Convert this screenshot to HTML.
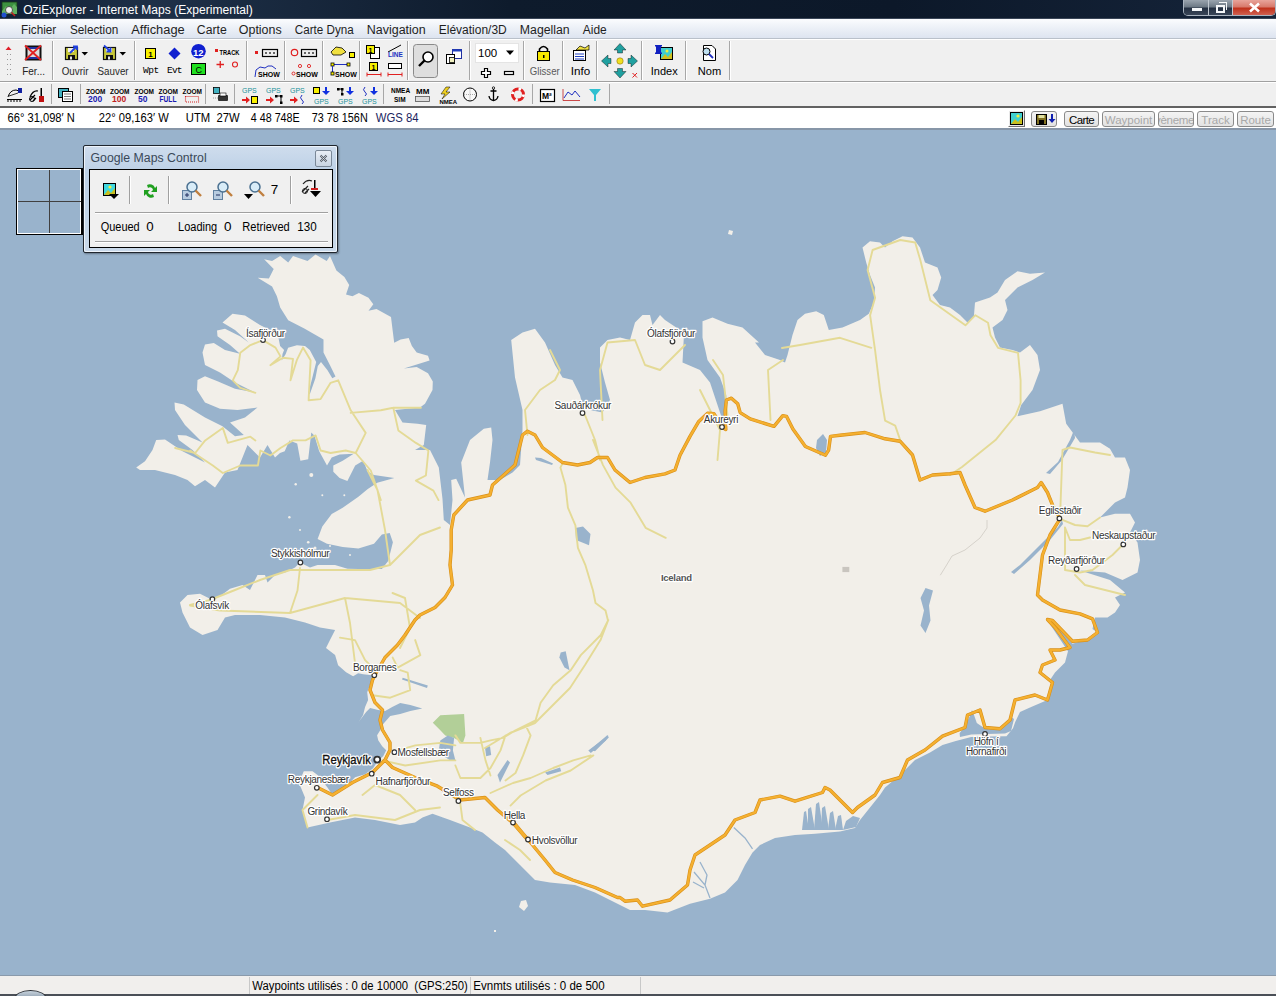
<!DOCTYPE html>
<html><head><meta charset="utf-8">
<style>
*{margin:0;padding:0;box-sizing:border-box}
html,body{width:1276px;height:996px;overflow:hidden;background:#f0f0f0;font-family:"Liberation Sans",sans-serif;font-size:12px;color:#000}
.abs{position:absolute}
#title{left:0;top:0;width:1276px;height:19px;background:linear-gradient(90deg,#102035 0%,#1e3048 12%,#0e1b2c 40%,#0c1829 70%,#15243a 100%);color:#fff;font-size:13px;border-bottom:1px solid #3a4658}
#menu{left:0;top:19px;width:1276px;height:20px;background:linear-gradient(#fbfcfe 0%,#eef2f8 40%,#dde4f0 100%);border-bottom:1px solid #b9c0ca}
#menu span{position:absolute;top:3px;font-size:12.5px;color:#1e1e1e}
#tb1{left:0;top:39px;width:1276px;height:43px;background:#f0f0f0;border-top:1px solid #fff;border-bottom:1px solid #a0a0a0}
#tb2{left:0;top:82px;width:1276px;height:26px;background:#f0f0f0;border-top:1px solid #fff;border-bottom:2px solid #626262}
#coord{left:0;top:108px;width:1276px;height:22px;background:#fff;border-bottom:2px solid #8796a8}
#coord span{position:absolute;top:5px;font-size:12px}
#map{left:0;top:130px;width:1276px;height:845px;background:#99b3cc;overflow:hidden}
#status{left:0;top:975px;width:1276px;height:21px;background:#f1efed;border-top:1px solid #8a9aab;overflow:hidden}
.btn{position:absolute;top:111px;height:16px;border:1px solid #8a8a8a;border-radius:3px;background:linear-gradient(#f4f4f4,#e2e2e2);font-size:11.5px;text-align:center;line-height:17px;overflow:hidden;white-space:nowrap}
.dis{color:#a8a8a8}
</style></head><body>
<div id="title" class="abs">
  <svg class="abs" style="left:1px;top:1px" width="18" height="17" viewBox="0 0 18 17">
    <rect x="1" y="1" width="15" height="12" fill="#3c9040" stroke="#1a3a1a" stroke-width="0.8"/>
    <path d="M1,10 L5,5 L9,8 L13,3 L16,6 L16,13 L1,13 Z" fill="#60b060"/>
    <circle cx="8" cy="9" r="3.5" fill="#f0f0f0" stroke="#333" stroke-width="0.8"/>
    <path d="M10.5,11.5 L14,15" stroke="#c02020" stroke-width="1.6"/>
    <circle cx="3" cy="14" r="2.5" fill="#2050d0"/>
  </svg>
    <div class="abs" style="left:1183px;top:0;width:93px;height:16px;border:1px solid #aab4c0;border-top:none;border-radius:0 0 5px 5px;overflow:hidden;background:#1a2536">
    <div class="abs" style="left:0;top:0;width:25px;height:15px;background:linear-gradient(#9aa4ae 0%,#6e7a86 45%,#243042 55%,#3a4658 100%);border-right:1px solid #c0c8d0"></div>
    <div class="abs" style="left:8px;top:8px;width:10px;height:3px;background:#f4f6f8"></div>
    <div class="abs" style="left:25px;top:0;width:24px;height:15px;background:linear-gradient(#9aa4ae 0%,#6e7a86 45%,#243042 55%,#3a4658 100%);border-right:1px solid #c0c8d0"></div>
    <div class="abs" style="left:35px;top:2px;width:8px;height:8px;border:1px solid #f4f6f8;border-left:none;border-bottom:none"></div>
    <div class="abs" style="left:32px;top:5px;width:9px;height:8px;border:2px solid #f4f6f8"></div>
    <div class="abs" style="left:49px;top:0;width:44px;height:15px;background:linear-gradient(#e8a49a 0%,#d87a6c 45%,#c0321c 55%,#d06050 100%)"></div>
    <svg class="abs" style="left:64px;top:2px" width="14" height="11"><path d="M2,1.5 L11,9.5 M11,1.5 L2,9.5" stroke="#fff" stroke-width="2.6"/></svg>
  </div>
</div>
<div id="menu" class="abs"></div>
<div id="tb1" class="abs"></div>
<div id="tb2" class="abs"></div>
<svg width="1276" height="67" viewBox="0 39 1276 67" style="position:absolute;left:0;top:39px" font-family="Liberation Sans, sans-serif">
<!-- separators tb1 -->
<g stroke="#a7a7a7" stroke-width="1">
<line x1="52.5" y1="41" x2="52.5" y2="80"/><line x1="134.5" y1="41" x2="134.5" y2="80"/><line x1="246.5" y1="41" x2="246.5" y2="80"/>
<line x1="284.5" y1="41" x2="284.5" y2="80"/><line x1="322.5" y1="41" x2="322.5" y2="80"/><line x1="359.5" y1="41" x2="359.5" y2="80"/>
<line x1="407.5" y1="41" x2="407.5" y2="80"/><line x1="469.5" y1="41" x2="469.5" y2="80"/><line x1="523.5" y1="41" x2="523.5" y2="80"/>
<line x1="562.5" y1="41" x2="562.5" y2="80"/><line x1="596.5" y1="41" x2="596.5" y2="80"/><line x1="641.5" y1="41" x2="641.5" y2="80"/>
<line x1="685.5" y1="41" x2="685.5" y2="80"/><line x1="729.5" y1="41" x2="729.5" y2="80"/>
<!-- tb2 -->
<line x1="51.5" y1="84" x2="51.5" y2="104"/><line x1="80.5" y1="84" x2="80.5" y2="104"/><line x1="205.5" y1="84" x2="205.5" y2="104"/>
<line x1="234.5" y1="84" x2="234.5" y2="104"/><line x1="383.5" y1="84" x2="383.5" y2="104"/><line x1="532.5" y1="84" x2="532.5" y2="104"/>
<line x1="609.5" y1="84" x2="609.5" y2="104"/>
</g>
<g stroke="#ffffff" stroke-width="1">
<line x1="53.5" y1="41" x2="53.5" y2="80"/><line x1="135.5" y1="41" x2="135.5" y2="80"/><line x1="247.5" y1="41" x2="247.5" y2="80"/>
<line x1="285.5" y1="41" x2="285.5" y2="80"/><line x1="323.5" y1="41" x2="323.5" y2="80"/><line x1="360.5" y1="41" x2="360.5" y2="80"/>
<line x1="408.5" y1="41" x2="408.5" y2="80"/><line x1="470.5" y1="41" x2="470.5" y2="80"/><line x1="524.5" y1="41" x2="524.5" y2="80"/>
<line x1="563.5" y1="41" x2="563.5" y2="80"/><line x1="597.5" y1="41" x2="597.5" y2="80"/><line x1="642.5" y1="41" x2="642.5" y2="80"/>
<line x1="686.5" y1="41" x2="686.5" y2="80"/><line x1="730.5" y1="41" x2="730.5" y2="80"/>
</g>
<!-- grip -->
<path d="M5.5,50 L8.5,46.5 L11.5,50 Z" fill="#e0202a"/>
<g fill="#9a9a9a"><rect x="7" y="54" width="1" height="1"/><rect x="10" y="54" width="1" height="1"/><rect x="7" y="59" width="1" height="1"/><rect x="10" y="59" width="1" height="1"/><rect x="7" y="64" width="1" height="1"/><rect x="10" y="64" width="1" height="1"/><rect x="7" y="69" width="1" height="1"/><rect x="10" y="69" width="1" height="1"/><rect x="7" y="74" width="1" height="1"/><rect x="10" y="74" width="1" height="1"/></g>
<!-- Fer icon -->
<rect x="26.5" y="46.5" width="14" height="13" fill="#dcdcdc" stroke="#101010" stroke-width="2"/>
<rect x="27" y="47" width="13" height="2" fill="#2030a0"/><rect x="27" y="57" width="13" height="2" fill="#2030a0"/>
<path d="M25,45.5 L41,60 M41,45.5 L25,60" stroke="#e02020" stroke-width="1.8"/>
<!-- Ouvrir -->
<rect x="65.5" y="47.5" width="12" height="12" fill="#c8c83a" stroke="#101010" stroke-width="1.2"/>
<rect x="68" y="48" width="6" height="4" fill="#f0f0f0"/><rect x="68" y="55" width="7" height="5" fill="#101010"/><rect x="70" y="56.5" width="2" height="3" fill="#e8e8e8"/>
<path d="M70,53 L76,47 M73,46.5 L77,46.5 L77,50" stroke="#2040e0" stroke-width="1.8" fill="none"/>
<path d="M81.5,52 L88,52 L84.75,55.5 Z" fill="#000"/>
<!-- Sauver -->
<rect x="103.5" y="47.5" width="12" height="12" fill="#c8c83a" stroke="#101010" stroke-width="1.2"/>
<rect x="106" y="48" width="6" height="4" fill="#f0f0f0"/><rect x="106" y="55" width="7" height="5" fill="#101010"/><rect x="108" y="56.5" width="2" height="3" fill="#e8e8e8"/>
<path d="M104,45.5 L110,51 M106.5,51.5 L110.5,51.5 L110.5,47.5" stroke="#2040e0" stroke-width="1.8" fill="none"/>
<path d="M119.5,52 L126,52 L122.75,55.5 Z" fill="#000"/>
<!-- Wpt Evt -->
<rect x="145.5" y="48.5" width="10" height="10" fill="#f8f000" stroke="#000" stroke-width="1"/>
<text x="148.3" y="57" font-size="8" font-weight="bold" fill="#000">1</text>
<text x="143" y="73" font-size="9.5" font-family="Liberation Mono, monospace" fill="#000" letter-spacing="-0.5">Wpt</text>
<path d="M174.5,47.5 L180.5,53.5 L174.5,59.5 L168.5,53.5 Z" fill="#1020d0"/>
<text x="167" y="73" font-size="9.5" font-family="Liberation Mono, monospace" fill="#000" letter-spacing="-0.8">Evt</text>
<circle cx="198.5" cy="51.2" r="7.3" fill="#1020d0"/>
<text x="193" y="55.5" font-size="9.5" font-weight="bold" fill="#fff">12</text>
<rect x="191.5" y="63.5" width="14" height="11" fill="#20e020" stroke="#000" stroke-width="1"/>
<text x="195.5" y="72.5" font-size="9" fill="#000">C</text>
<rect x="215" y="49" width="3" height="3" fill="#e02020"/>
<text x="219.5" y="54.5" font-size="7.5" font-weight="bold" fill="#000" textLength="20" lengthAdjust="spacingAndGlyphs">TRACK</text>
<path d="M216.5,64.5 L224,64.5 M220.25,61 L220.25,68" stroke="#e02020" stroke-width="1.3"/>
<circle cx="235" cy="64.5" r="2.5" fill="none" stroke="#e02020" stroke-width="1.1"/>
<!-- show group 1 -->
<rect x="255" y="51" width="3" height="3" fill="#e02020"/>
<rect x="262.5" y="49.5" width="15" height="7" fill="#eee" stroke="#000" stroke-width="1.2"/>
<g fill="#666"><rect x="265" y="52" width="2" height="2"/><rect x="269" y="52" width="2" height="2"/><rect x="273" y="52" width="2" height="2"/></g>
<path d="M255,77 L256,70 L260,67 L265,68 L268,66 L272,66 L276,69" stroke="#2030c0" stroke-width="1" fill="none"/>
<text x="258" y="76.5" font-size="7" font-weight="bold" fill="#000">SHOW</text>
<!-- show group 2 -->
<circle cx="294.5" cy="52.5" r="3.2" fill="none" stroke="#e02020" stroke-width="1.2"/>
<rect x="301.5" y="49.5" width="15" height="7" fill="#eee" stroke="#000" stroke-width="1.2"/>
<g fill="#666"><rect x="304" y="52" width="2" height="2"/><rect x="308" y="52" width="2" height="2"/><rect x="312" y="52" width="2" height="2"/></g>
<circle cx="300" cy="66" r="1.6" fill="none" stroke="#e02020" stroke-width="0.9"/><circle cx="309" cy="66" r="1.6" fill="none" stroke="#e02020" stroke-width="0.9"/>
<circle cx="293.5" cy="73.5" r="1.5" fill="none" stroke="#e02020" stroke-width="0.9"/>
<text x="296" y="76.5" font-size="7" font-weight="bold" fill="#000">SHOW</text>
<!-- show group 3 -->
<path d="M331,52 L336,47 L342,48 L346,52 L341,55 L333,55 Z" fill="#f0e040" stroke="#000" stroke-width="0.8"/>
<rect x="349.5" y="52.5" width="5" height="5" fill="#f8f000" stroke="#000" stroke-width="1"/>
<path d="M332,64.5 L349,64.5" stroke="#2030c0" stroke-width="1"/>
<rect x="331" y="63" width="3" height="3" fill="#f8f000" stroke="#000" stroke-width="0.8"/><rect x="347" y="63" width="3" height="3" fill="#f8f000" stroke="#000" stroke-width="0.8"/>
<path d="M332.5,66 L332.5,72" stroke="#2030c0"/>
<rect x="331" y="72" width="3" height="3" fill="#f8f000" stroke="#000" stroke-width="0.8"/>
<text x="335" y="76.5" font-size="7" font-weight="bold" fill="#000">SHOW</text>
<!-- 4 icons -->
<rect x="370.5" y="47.5" width="9" height="11" fill="#fff" stroke="#000" stroke-width="1"/>
<rect x="366.5" y="45.5" width="8" height="8" fill="#f8f000" stroke="#000" stroke-width="1"/>
<text x="368.5" y="52.5" font-size="7" font-weight="bold" fill="#000">1</text>
<path d="M388,52 L401,45" stroke="#000" stroke-width="1"/>
<text x="388" y="57" font-size="6.5" font-weight="bold" fill="#2030c0">LINE</text>
<rect x="369.5" y="62.5" width="8" height="8" fill="#f8f000" stroke="#000" stroke-width="1"/>
<text x="371.5" y="69.5" font-size="7" font-weight="bold" fill="#000">1</text>
<path d="M367,74.5 L381,74.5 M367,72.5 L367,76.5 M381,72.5 L381,76.5" stroke="#e02020" stroke-width="1"/>
<rect x="388.5" y="63.5" width="13" height="5" fill="#fff" stroke="#000" stroke-width="1"/>
<path d="M388,74.5 L402,74.5 M388,72.5 L388,76.5 M402,72.5 L402,76.5" stroke="#e02020" stroke-width="1"/>
<!-- pressed magnifier -->
<rect x="413.5" y="44.5" width="24" height="33" rx="3" fill="#dedede" stroke="#8a8a8a" stroke-width="1"/>
<circle cx="428" cy="57" r="5" fill="#fff" stroke="#000" stroke-width="1.6"/>
<path d="M424.5,60.5 L419,66" stroke="#000" stroke-width="2.4"/>
<!-- window icon -->
<rect x="452.5" y="49.5" width="9" height="9" fill="#fff" stroke="#2030a0" stroke-width="1"/><rect x="452.5" y="49.5" width="9" height="2" fill="#2040c0"/>
<rect x="446.5" y="54.5" width="8" height="9" fill="#fff" stroke="#000" stroke-width="1"/>
<rect x="449.5" y="57.5" width="5" height="5" fill="#f0f0c0" stroke="#000" stroke-width="0.8"/>
<!-- combo -->
<rect x="475.5" y="43.5" width="43" height="19" fill="#fff" stroke="#e4e4e4" stroke-width="1"/>
<text x="478" y="57" font-size="11.5" fill="#000">100</text>
<path d="M506,50.5 L514,50.5 L510,55 Z" fill="#000"/>
<path d="M484.5,68.5 L487.5,68.5 L487.5,71.5 L490.5,71.5 L490.5,74.5 L487.5,74.5 L487.5,77.5 L484.5,77.5 L484.5,74.5 L481.5,74.5 L481.5,71.5 L484.5,71.5 Z" fill="#fff" stroke="#000" stroke-width="1.2"/>
<rect x="504.5" y="71.5" width="9" height="3" fill="#fff" stroke="#000" stroke-width="1.2"/>
<!-- Glisser -->
<path d="M539.5,52 L539.5,49 Q543.5,44 547.5,49 L547.5,52" fill="none" stroke="#000" stroke-width="1.6"/>
<rect x="537.5" y="51.5" width="12" height="9" fill="#f8e800" stroke="#000" stroke-width="1"/>
<rect x="543" y="55" width="1.5" height="3" fill="#000"/>
<!-- Info -->
<rect x="573.5" y="50.5" width="12" height="10" fill="#fff" stroke="#000" stroke-width="1"/>
<path d="M575,54 L584,54 M575,56.5 L584,56.5 M575,59 L584,59" stroke="#2040c0" stroke-width="1"/>
<path d="M576,50 L580,46 L585,48 L589,45 L589,50 Z" fill="#f0e040" stroke="#000" stroke-width="0.7"/>
<!-- arrows -->
<g fill="#20a0a0" stroke="#000" stroke-width="0.4">
<path d="M620,43.5 L626,50 L622.5,50 L622.5,53 L617.5,53 L617.5,50 L614,50 Z"/>
<path d="M620,78 L626,71.5 L622.5,71.5 L622.5,68.5 L617.5,68.5 L617.5,71.5 L614,71.5 Z"/>
<path d="M601.5,61 L608,55 L608,58.5 L611,58.5 L611,63.5 L608,63.5 L608,67 Z"/>
<path d="M637.5,61 L631,55 L631,58.5 L628,58.5 L628,63.5 L631,63.5 L631,67 Z"/>
</g>
<circle cx="620" cy="61" r="3.2" fill="#f0e020" stroke="#806000" stroke-width="0.5"/>
<path d="M632.5,73 L637,77.5 M637,73 L632.5,77.5" stroke="#e02020" stroke-width="1"/>
<!-- Index -->
<rect x="660.5" y="47.5" width="12" height="12" fill="#40d0d0" stroke="#000" stroke-width="1"/>
<path d="M661,59 L665,54 L668,57 L672,52 L672,59 Z" fill="#d0c020"/>
<circle cx="667" cy="51" r="1.5" fill="#f0f040"/>
<rect x="656" y="45.5" width="5" height="8" fill="#1020c0"/><rect x="655" y="45" width="7" height="1.5" fill="#1020c0"/><rect x="655" y="52.5" width="7" height="1.5" fill="#1020c0"/>
<!-- Nom -->
<path d="M703.5,45.5 L712,45.5 L715.5,49 L715.5,60.5 L703.5,60.5 Z" fill="#fff" stroke="#000" stroke-width="1"/>
<circle cx="706.5" cy="51.5" r="3.5" fill="#c0e0f0" stroke="#000" stroke-width="1"/>
<path d="M709,54 L713,58" stroke="#2030c0" stroke-width="1.8"/>

<!-- toolbar 2 -->
<path d="M7,99.5 L22,99.5 M8,99.5 L8,102 M11,99.5 L11,102 M14,99.5 L14,102 M17,99.5 L17,102 M20,99.5 L20,102" stroke="#000" stroke-width="1"/>
<path d="M8,97 Q10,90 16,90 L19,91" fill="none" stroke="#000" stroke-width="1"/><path d="M9,96 L18,93" stroke="#000" stroke-width="0.8"/>
<rect x="18" y="88" width="4" height="5" fill="#1020a0"/>
<path d="M30,97 Q33,90 38,91 M30,100 L35,95 M33,101 L36,98" fill="none" stroke="#000" stroke-width="1.2"/>
<circle cx="32" cy="99" r="2.5" fill="none" stroke="#000" stroke-width="1"/>
<rect x="40.5" y="88" width="1.5" height="10" fill="#000"/><rect x="39" y="96" width="5" height="6" fill="#c01010"/>
<rect x="58.5" y="88.5" width="10" height="9" fill="#40b0c0" stroke="#000" stroke-width="1"/>
<rect x="62.5" y="91.5" width="10" height="10" fill="#fff" stroke="#000" stroke-width="1"/>
<path d="M64,94 L71,94 M64,96.5 L71,96.5 M64,99 L71,99" stroke="#555" stroke-width="0.8"/>
<g font-size="6.5" font-weight="bold" font-family="Liberation Sans, sans-serif">
<text x="86" y="93.5" fill="#000">ZOOM</text><text x="88" y="101.5" font-size="8.5" font-weight="bold" fill="#1a1ab0">200</text>
<text x="110" y="93.5" fill="#000">ZOOM</text><text x="112" y="101.5" font-size="8.5" font-weight="bold" fill="#c02020">100</text>
<text x="134.5" y="93.5" fill="#000">ZOOM</text><text x="138" y="101.5" font-size="8.5" font-weight="bold" fill="#1a1ab0">50</text>
<text x="158.5" y="93.5" fill="#000">ZOOM</text><text x="159.5" y="101.5" font-size="8.5" font-weight="bold" fill="#1a1ab0" textLength="17" lengthAdjust="spacingAndGlyphs">FULL</text>
<text x="182.5" y="93.5" fill="#000">ZOOM</text>
</g>
<rect x="185.5" y="96.5" width="13" height="5.5" fill="none" stroke="#d02020" stroke-width="1.1" stroke-dasharray="1,1"/>
<rect x="213.5" y="87.5" width="6" height="6" fill="#40b0c0" stroke="#000" stroke-width="0.8"/>
<rect x="218" y="95" width="10" height="6" rx="1" fill="#333"/><rect x="220" y="93" width="6" height="3" fill="#fff" stroke="#000" stroke-width="0.6"/>
<path d="M213,98 L218,98" stroke="#888" stroke-width="0.8" stroke-dasharray="1,1"/>
<g font-size="7" fill="#20909a" font-family="Liberation Sans, sans-serif">
<text x="242" y="93">GPS</text><text x="266" y="93">GPS</text><text x="290" y="93">GPS</text>
<text x="314" y="103.5">GPS</text><text x="338" y="103.5">GPS</text><text x="362" y="103.5">GPS</text>
</g>
<g fill="#e02020"><path d="M242,99 L246,99 L246,96.5 L250,100 L246,103.5 L246,101 L242,101 Z"/><path d="M266,99 L270,99 L270,96.5 L274,100 L270,103.5 L270,101 L266,101 Z"/><path d="M290,99 L294,99 L294,96.5 L298,100 L294,103.5 L294,101 L290,101 Z"/></g>
<rect x="251.5" y="96.5" width="6" height="7" fill="#f8f000" stroke="#000" stroke-width="1"/>
<path d="M276,96 L281,96 L281,103" stroke="#000" stroke-width="1" fill="none"/><rect x="275" y="95" width="2.5" height="2.5" fill="#000"/><rect x="280" y="95" width="2.5" height="2.5" fill="#000"/><rect x="280" y="101.5" width="2.5" height="2.5" fill="#000"/>
<path d="M302,95 Q299,98 302,100 Q305,102 302,104" stroke="#2030c0" fill="none" stroke-width="1"/>
<rect x="313.5" y="87.5" width="6" height="6" fill="#f8f000" stroke="#000" stroke-width="1"/>
<path d="M325,87 L325,91 L322,91 L326,95 L330,91 L327,91 L327,87 Z" fill="#1030e0"/>
<path d="M338,89 L342,89 L342,94" stroke="#000" fill="none"/><rect x="337" y="88" width="2.5" height="2.5" fill="#000"/><rect x="341" y="88" width="2.5" height="2.5" fill="#000"/><rect x="341" y="93" width="2.5" height="2.5" fill="#000"/>
<path d="M349,87 L349,91 L346,91 L350,95 L354,91 L351,91 L351,87 Z" fill="#1030e0"/>
<path d="M365,87 Q362,90 365,92 Q368,94 365,96" stroke="#2030c0" fill="none"/>
<path d="M373,87 L373,91 L370,91 L374,95 L378,91 L375,91 L375,87 Z" fill="#1030e0"/>
<g font-size="6.5" font-weight="bold" fill="#000"><text x="391" y="93">NMEA</text><text x="394" y="101.5">SIM</text>
<text x="416" y="93.5" font-size="8">MM</text></g>
<rect x="415.5" y="96.5" width="14" height="5" fill="#ddd" stroke="#555" stroke-width="0.8"/>
<path d="M446,87 L441,94 L445,94 L442,99 L450,92 L446,92 L450,87 Z" fill="#f0d020" stroke="#000" stroke-width="0.5"/>
<text x="439.5" y="103.5" font-size="6" font-weight="bold" fill="#000">NMEA</text>
<circle cx="470" cy="94.5" r="6.5" fill="#f8f8f8" stroke="#000" stroke-width="1"/>
<path d="M470,88.5 L470,100.5 M464,94.5 L476,94.5" stroke="#888" stroke-width="0.7" stroke-dasharray="1,1"/>
<path d="M493.5,89 L493.5,100 M490.5,91 L496.5,91 M489,96 Q489.5,100 493.5,100.5 Q497.5,100 498,96" stroke="#000" fill="none" stroke-width="1.3"/>
<circle cx="493.5" cy="88" r="1.2" fill="none" stroke="#000" stroke-width="0.8"/>
<circle cx="518" cy="94.5" r="5.5" fill="none" stroke="#e02020" stroke-width="3"/>
<circle cx="518" cy="94.5" r="5.5" fill="none" stroke="#fff" stroke-width="3" stroke-dasharray="2.5,6.1"/>
<rect x="540.5" y="89.5" width="14" height="12" fill="#fff" stroke="#000" stroke-width="1.2"/>
<text x="542" y="99" font-size="8.5" font-weight="bold" fill="#000">M²</text>
<path d="M563,100.5 L580,100.5 M563,89 L563,100.5" stroke="#c02020" stroke-width="0.8"/>
<path d="M564,98 L568,92 L572,95 L575,91 L580,97" stroke="#2030c0" fill="none" stroke-width="1"/>
<path d="M589,89 L601,89 L596,95 L596,101 L594,101 L594,95 Z" fill="#30c0d0"/>
</svg>

<div id="coord" class="abs"></div>
<div class="abs" style="left:1008px;top:110px;width:17px;height:17px;border:1px solid;border-color:#fff #707070 #707070 #fff;background:#e8e8e8">
  <svg width="15" height="15" class="abs" style="left:0;top:0"><rect x="1.5" y="1.5" width="12" height="12" fill="#40d0d0" stroke="#000"/><path d="M2,13 L6,8 L9,11 L13,6 L13,13 Z" fill="#c8c020"/><circle cx="9" cy="5" r="1.6" fill="#f0f040"/></svg>
</div>
<div class="btn" style="left:1031px;width:26px">
  <svg width="24" height="14" class="abs" style="left:1px;top:0"><rect x="3.5" y="2.5" width="10" height="10" fill="#807020" stroke="#000"/><rect x="5.5" y="3" width="6" height="3" fill="#e0e0a0"/><rect x="6" y="8" width="5" height="4" fill="#000"/><path d="M18,2 L18,7 L15.5,7 L19,11 L22.5,7 L20,7 L20,2 Z" fill="#1020b0"/></svg>
</div>
<div class="btn" style="left:1064px;width:35px;letter-spacing:-0.6px">Carte</div>
<div class="btn dis" style="left:1102px;width:53px">Waypoint</div>
<div class="btn dis" style="left:1158px;width:36px;text-indent:-4px;letter-spacing:-0.3px">vèneme</div>
<div class="btn dis" style="left:1197px;width:37px">Track</div>
<div class="btn dis" style="left:1237px;width:37px">Route</div>
<div id="map" class="abs">
<svg width="1276" height="845" viewBox="0 0 1276 845" style="position:absolute;left:0;top:0" font-family="Liberation Sans, sans-serif">
<path d="M136.2,337.5 L145.0,331.2 L152.5,320.0 L156.2,310.0 L165.0,309.5 L182.5,321.2 L205.0,332.5 L192.5,320.0 L178.8,310.0 L177.5,305.0 L186.2,305.5 L202.5,312.5 L185.0,295.0 L175.0,280.0 L174.5,272.5 L183.8,274.5 L205.0,287.5 L222.5,296.2 L235.0,306.2 L243.8,305.0 L230.0,292.5 L245.0,287.5 L257.5,277.5 L237.5,280.0 L220.0,278.8 L205.0,272.5 L197.0,260.0 L197.5,250.0 L205.0,246.2 L217.5,251.2 L235.0,258.8 L255.0,262.5 L235.0,252.5 L220.0,242.5 L205.0,235.0 L202.5,222.5 L205.0,214.5 L213.8,213.0 L225.0,220.0 L240.0,223.8 L230.0,215.0 L217.5,206.2 L217.0,200.5 L225.0,198.8 L240.0,206.2 L248.8,212.5 L235.0,200.0 L222.5,192.5 L232.5,183.8 L245.0,185.5 L260.0,195.0 L270.0,200.0 L278.5,208.0 L280.1,216.1 L284.1,220.1 L282.5,224.1 L281.7,230.5 L285.7,224.1 L288.1,217.7 L296.9,215.3 L305.0,216.1 L309.8,220.1 L316.2,232.1 L312.2,248.2 L308.2,263.5 L309.8,264.3 L315.4,248.2 L317.8,236.1 L321.0,232.1 L327.5,240.2 L332.3,248.2 L335.5,246.6 L330.0,235.3 L323.5,222.4 L323.5,209.6 L304.3,198.4 L288.2,190.3 L280.2,177.5 L276.9,166.2 L272.1,156.6 L257.7,147.8 L268.9,148.6 L273.7,138.9 L264.1,129.3 L272.1,130.9 L280.2,126.1 L288.2,132.5 L293.0,126.1 L307.5,130.9 L315.5,124.5 L326.7,130.9 L330.0,126.1 L336.4,140.5 L344.4,146.9 L349.2,155.0 L346.0,164.6 L352.4,166.2 L358.9,163.0 L368.5,167.8 L373.3,174.3 L368.5,180.7 L376.5,179.1 L391.0,187.1 L392.6,200.0 L394.2,212.8 L400.6,209.6 L408.7,208.0 L411.9,216.0 L416.7,222.4 L428.0,225.7 L429.6,230.5 L403.9,238.5 L416.7,236.9 L428.0,243.3 L432.8,251.4 L432.5,260.0 L425.0,273.8 L420.0,277.5 L395.0,280.0 L402.5,292.5 L417.5,293.8 L426.2,295.0 L423.8,315.0 L415.0,320.0 L430.0,320.0 L438.8,337.5 L442.5,369.0 L443.8,390.0 L450.0,395.0 L452.5,370.0 L451.2,350.0 L456.2,348.8 L465.0,367.5 L461.2,332.5 L470.0,310.0 L483.8,298.8 L491.2,297.5 L492.5,310.0 L490.0,332.5 L487.5,350.0 L500.0,350.0 L512.5,342.5 L520.0,335.0 L522.5,300.0 L522.5,280.0 L515.0,247.5 L511.2,210.0 L522.5,202.5 L535.0,198.8 L545.0,212.5 L555.0,235.0 L562.5,247.5 L572.5,250.0 L580.0,265.0 L582.5,275.0 L590.0,280.0 L602.5,282.5 L610.0,270.0 L605.0,252.5 L600.0,232.5 L600.0,217.5 L607.5,210.0 L620.0,207.5 L630.0,210.0 L635.0,192.5 L642.5,185.0 L650.0,185.0 L652.5,195.0 L660.0,185.0 L665.0,190.0 L680.0,200.0 L683.8,207.5 L682.5,232.5 L700.0,240.0 L710.0,252.5 L717.5,275.0 L722.5,290.0 L725.0,297.5 L727.5,287.5 L726.2,265.0 L720.0,247.5 L707.5,230.0 L702.5,207.5 L702.5,191.2 L712.5,187.5 L727.5,193.8 L742.5,197.5 L759.0,212.5 L755.0,212.5 L765.0,225.0 L780.0,230.0 L785.0,232.5 L787.5,225.0 L792.5,205.0 L797.5,190.0 L805.0,183.8 L816.2,181.2 L823.8,185.0 L828.8,200.0 L842.5,197.5 L860.0,190.0 L868.8,183.8 L873.8,172.5 L875.0,157.5 L870.0,145.0 L866.2,132.5 L862.5,117.5 L870.0,111.2 L880.0,112.5 L885.0,117.5 L892.5,111.2 L902.5,106.2 L912.5,107.5 L920.0,117.5 L925.0,132.5 L937.5,137.5 L941.2,147.5 L937.5,160.0 L932.5,165.0 L940.0,175.0 L950.0,177.5 L960.0,185.0 L967.5,192.5 L973.8,187.5 L975.0,172.5 L990.0,167.5 L997.5,162.5 L1005.0,150.0 L1017.5,141.2 L1030.0,143.8 L1045.0,142.5 L1032.5,150.0 L1017.5,157.5 L1005.0,170.0 L1007.5,180.0 L1002.5,190.0 L992.5,197.5 L995.0,207.5 L1000.0,217.5 L1012.5,220.0 L1020.0,222.5 L1030.0,215.0 L1037.5,225.0 L1040.0,240.0 L1032.5,260.0 L1021.2,275.0 L1017.5,286.2 L1040.0,281.2 L1062.5,273.8 L1066.2,293.8 L1080.0,312.5 L1100.0,312.5 L1110.0,318.8 L1115.0,327.5 L1125.0,327.5 L1130.0,340.0 L1127.5,357.5 L1125.0,367.5 L1115.0,372.5 L1100.0,387.5 L1115.0,383.8 L1130.0,383.8 L1135.0,392.5 L1130.0,402.5 L1137.5,412.5 L1140.0,430.0 L1137.5,442.5 L1122.5,450.0 L1105.0,442.5 L1080.0,440.5 L1110.0,450.0 L1125.0,462.5 L1115.0,467.5 L1120.0,475.0 L1115.0,482.5 L1107.5,487.5 L1095.0,487.5 L1092.5,499.0 L1097.5,502.5 L1085.0,510.0 L1072.5,513.8 L1052.5,492.0 L1050.5,495.0 L1068.0,521.2 L1065.0,532.5 L1055.0,542.5 L1050.0,550.0 L1052.5,555.0 L1047.5,570.0 L1030.0,577.5 L1020.0,582.0 L1015.2,592.0 L1013.0,598.2 L1006.5,606.2 L987.0,606.5 L971.2,607.0 L955.8,611.0 L942.5,615.0 L930.0,622.5 L915.0,630.0 L900.0,645.0 L885.0,657.5 L880.0,665.0 L860.0,690.0 L855.0,698.0 L840.0,701.5 L815.0,703.8 L795.0,705.0 L775.0,708.0 L760.0,715.0 L752.5,722.5 L745.0,735.0 L737.5,750.0 L725.0,762.5 L710.0,768.8 L690.0,773.8 L667.5,782.5 L645.0,780.0 L630.0,780.0 L615.0,772.5 L595.0,762.5 L575.0,755.0 L550.0,752.5 L535.0,750.0 L520.0,735.0 L505.0,720.0 L495.0,712.5 L482.5,702.5 L470.0,697.5 L450.0,690.0 L432.5,683.8 L422.5,687.5 L415.0,692.5 L400.0,695.0 L375.0,690.0 L355.0,687.5 L330.0,692.5 L307.5,697.5 L302.5,680.0 L305.0,667.5 L298.8,652.5 L303.8,641.2 L312.5,641.2 L317.5,645.0 L327.5,657.5 L332.5,665.0 L345.0,657.5 L355.1,647.3 L365.1,644.3 L373.1,638.3 L378.2,630.3 L383.2,626.3 L386.2,620.2 L382.2,616.2 L378.2,610.2 L377.1,605.2 L380.2,600.2 L383.2,594.1 L390.2,586.1 L400.2,584.1 L410.3,581.1 L422.3,578.6 L410.3,575.1 L400.2,573.1 L392.2,577.1 L385.2,581.1 L378.2,580.1 L370.1,578.1 L366.1,582.1 L360.1,590.1 L358.1,593.1 L363.1,585.1 L365.1,577.1 L368.1,570.0 L367.2,562.3 L370.2,554.3 L374.2,546.2 L372.2,545.2 L363.2,544.2 L358.2,543.2 L353.1,546.2 L346.1,542.2 L338.1,535.2 L335.1,525.1 L326.0,518.1 L330.0,510.1 L335.1,500.0 L320.0,497.5 L305.0,492.5 L285.0,487.5 L260.0,485.0 L235.0,485.0 L225.0,487.5 L217.5,500.0 L202.5,505.0 L190.0,497.5 L182.5,482.5 L180.0,472.5 L187.5,465.0 L200.0,463.8 L210.0,468.8 L220.0,466.2 L230.0,458.8 L242.5,455.0 L250.0,460.0 L257.5,445.0 L265.0,445.0 L267.5,452.5 L275.0,445.0 L285.0,442.5 L295.0,437.5 L300.0,432.5 L310.0,437.5 L317.5,435.0 L335.0,435.0 L347.5,438.8 L358.4,438.9 L381.9,438.9 L388.2,431.1 L392.9,412.3 L389.7,402.9 L381.9,404.4 L374.0,413.8 L358.4,418.5 L342.7,417.0 L327.0,413.8 L317.6,409.1 L322.3,396.6 L331.7,384.0 L342.7,377.8 L358.4,366.8 L367.8,359.0 L377.2,352.7 L394.4,348.0 L374.0,344.9 L367.8,341.7 L363.1,330.8 L355.2,335.5 L347.4,351.1 L339.6,348.0 L333.3,341.7 L333.3,335.5 L342.7,330.8 L353.7,323.7 L339.6,324.5 L331.7,327.6 L327.0,335.5 L319.2,321.3 L314.5,305.7 L311.3,302.5 L308.2,329.2 L300.4,330.8 L297.2,313.5 L289.4,310.4 L284.7,321.3 L280.0,322.9 L275.0,327.5 L267.5,315.0 L260.0,327.5 L247.5,315.0 L237.5,340.0 L225.0,342.5 L215.0,357.5 L205.0,350.0 L195.0,356.2 L187.5,350.0 L175.0,345.0 L155.0,340.0 L140.0,340.0 Z" fill="#f2efe9"/>
<path d="M521.0,771.0 L526.0,770.0 L528.0,776.0 L524.0,781.0 L519.0,777.0 Z" fill="#f2efe9"/>
<path d="M729.0,100.0 L733.0,101.0 L732.0,105.0 L728.0,104.0 Z" fill="#f2efe9"/>
<path d="M494.0,800.0 L496.0,800.0 L496.0,802.0 L494.0,802.0 Z" fill="#f2efe9"/>
<circle cx="311.3" cy="344.9" r="2" fill="#f2efe9"/>
<circle cx="295.7" cy="354.3" r="1.2" fill="#f2efe9"/>
<circle cx="289.4" cy="387.20000000000005" r="1.2" fill="#f2efe9"/>
<circle cx="308.2" cy="412.29999999999995" r="1.3" fill="#f2efe9"/>
<circle cx="322.3" cy="365.2" r="1" fill="#f2efe9"/>
<circle cx="344.3" cy="365.2" r="1" fill="#f2efe9"/>
<circle cx="300" cy="400" r="1" fill="#f2efe9"/>
<circle cx="315" cy="418" r="1.5" fill="#f2efe9"/>
<circle cx="326" cy="422" r="1.2" fill="#f2efe9"/>
<circle cx="330" cy="416" r="1" fill="#f2efe9"/>
<circle cx="350" cy="425" r="1" fill="#f2efe9"/>
<path d="M432.8,592.8 L440.3,585.3 L464.1,584.0 L465.4,605.4 L462.9,612.9 L454.1,607.9 L445.3,605.4 L440.3,600.3 Z" fill="#b2cf98"/>
<path d="M440.3,610.4 L447.8,605.4 L454.1,607.9 L452.9,620.4 L455.4,630.4 L450.3,630.4 L442.8,625.4 L439.1,617.9 Z" fill="#99b3cc"/>
<path d="M560.7,522.6 L565.7,521.3 L569.5,540.2 L564.5,537.6 L559.4,527.6 Z" fill="#99b3cc"/>
<path d="M588.3,620.4 L608.3,605.4 L605.8,610.4 L590.8,622.9 Z" fill="#99b3cc"/>
<path d="M402.7,547.7 L427.8,555.5 L427.0,558.0 L402.0,549.5 Z" fill="#99b3cc"/>
<path d="M575.4,398.0 L583.0,396.5 L590.5,404.0 L589.0,415.3 L581.0,412.0 L576.0,410.0 Z" fill="#99b3cc"/>
<path d="M535.0,327.5 L541.0,328.0 L553.0,333.5 L552.0,335.0 L536.0,330.0 Z" fill="#99b3cc"/>
<path d="M925.5,458.0 L933.0,460.5 L929.0,475.5 L930.5,490.5 L925.5,503.0 L920.5,495.5 L924.0,480.5 L920.5,468.0 Z" fill="#99b3cc"/>
<path d="M1062.0,390.0 L1058.0,397.0 L1040.0,415.0 L1020.0,435.0 L1011.0,442.0 L1014.0,444.0 L1030.0,430.0 L1050.0,410.0 L1063.0,394.0 Z" fill="#99b3cc"/>
<path d="M1074.0,300.0 L1070.0,310.0 L1058.0,332.0 L1046.0,343.0 L1050.0,344.0 L1062.0,330.0 L1075.0,308.0 Z" fill="#99b3cc"/>
<path d="M817.0,310.0 L823.0,304.0 L827.0,310.0 L826.0,322.0 L820.0,326.0 L816.0,318.0 Z" fill="#99b3cc"/>
<path d="M959.6,603.3 L965.9,594.5 L969.8,585.9 L972.0,580.0 L974.0,585.0 L976.8,592.9 L982.3,596.8 L988.6,599.2 L1001.1,599.2 L1007.4,592.9 L1012.0,587.4 L1014.0,589.0 L1011.0,601.0 L1005.0,603.5 L987.0,604.0 L971.3,604.5 L960.0,607.0 Z" fill="#99b3cc"/>
<path d="M802.0,700.0 L804.0,682.0 L806.0,681.0 L809.0,700.0 Z" fill="#99b3cc"/>
<path d="M808.0,700.0 L808.0,679.0 L811.0,677.0 L815.0,700.0 Z" fill="#99b3cc"/>
<path d="M814.0,700.0 L816.0,674.0 L819.0,672.0 L823.0,700.0 Z" fill="#99b3cc"/>
<path d="M821.0,700.0 L822.0,678.0 L825.0,676.0 L829.0,700.0 Z" fill="#99b3cc"/>
<path d="M828.0,700.0 L830.0,683.0 L833.0,681.0 L836.0,700.0 Z" fill="#99b3cc"/>
<path d="M835.0,700.0 L838.0,686.0 L841.0,685.0 L843.0,700.0 Z" fill="#99b3cc"/>
<path d="M843.0,700.0 L846.0,691.0 L853.0,686.0 L860.0,688.0 L856.0,697.0 Z" fill="#99b3cc"/>
<path d="M495.0,320.0 L505.0,317.5 L515.0,322.5 L512.5,335.0 L502.5,345.0 L495.0,342.5 Z" fill="#99b3cc"/>
<path d="M485.0,617.5 L490.0,616.2 L491.2,625.0 L486.2,626.2 Z" fill="#99b3cc"/>
<path d="M497.5,645.0 L507.5,630.0 L510.0,632.5 L500.0,652.5 Z" fill="#99b3cc"/>
<path d="M590.0,620.0 L607.5,605.0 L608.8,607.5 L595.0,621.2 Z" fill="#99b3cc"/>
<path d="M545.0,642.5 L560.0,637.5 L561.2,641.2 L547.5,645.0 Z" fill="#99b3cc"/>
<path d="M694.0,742.0 L705.0,755.0 L710.0,768.0 M700.0,732.0 L707.0,745.0 L705.0,755.0 M693.0,752.0 L704.0,758.0 M733.8,697.5 L745.0,708.0 L752.5,718.8" fill="none" stroke="#99b3cc" stroke-width="1.3"/>
<path d="M940.3,445.2 L946.0,436.0 L952.0,426.0 L965.0,420.0 L980.0,408.0 L987.0,398.0 L987.0,390.0" fill="none" stroke="#d6d2cb" stroke-width="1"/>
<rect x="842.4" y="436.9" width="6.9" height="5.2" fill="#c9c5bf"/>
<path d="M262.9,210.1 L250.4,215.1 L240.3,222.7 L237.8,240.2 L232.8,250.3 L240.3,257.8 L255.4,262.8 M262.9,210.1 L275.5,217.6 L280.5,226.4 L270.4,235.2 L283.0,227.7 L293.0,228.9 L290.5,250.3 L296.8,230.2 L303.0,217.6 L310.6,230.2 L308.6,270.3 L320.6,269.1 L330.6,252.8 L338.2,250.3 L350.7,280.3 L365.7,302.9 L355.7,323.0 L370.8,340.5 L380.8,370.1 M350.7,282.9 L380.8,280.3 L393.3,277.8 L420.9,277.8 M393.3,277.8 L398.3,300.4 L415.9,312.9 L428.4,320.5 L425.9,345.5 L415.9,350.6 L433.4,360.6 L438.5,370.1 M190.2,320.5 L212.8,335.5 L222.8,343.0 L240.3,335.5 L257.9,335.5 L260.4,320.5 L270.4,325.5 L280.5,318.0 L293.0,310.4 L305.5,310.4 L315.6,305.4 L320.6,320.5 L330.6,323.0 L345.7,320.5 L355.7,323.0 M175.1,318.0 L195.2,323.0 L205.2,310.4 L222.8,297.9 L227.8,312.9 L250.4,306.7 L255.4,310.4 M562.9,332.6 L560.4,337.6 L565.4,355.1 L567.9,377.7 L575.4,395.3 L577.9,417.8 L585.5,435.4 L593.0,460.5 L595.5,473.0 L605.5,480.5 L608.0,490.6 L600.5,510.1 M600.5,510.0 L585.0,535.0 L570.0,558.0 L535.0,593.0 L510.0,603.0 L485.0,618.0 M593.0,310.0 L603.0,335.1 L615.5,357.6 L630.6,372.7 L645.6,397.8 L665.7,407.8 M440.0,397.5 L420.0,405.0 L390.0,435.0 L370.0,440.0 L320.0,440.0 L290.0,440.0 L260.0,450.0 L235.0,460.0 L210.0,470.0 L190.0,475.0 M390.0,435.0 L385.0,400.0 L377.5,360.0 L367.5,340.0 M190.0,475.5 L220.0,480.5 L290.0,483.0 L345.0,468.0 L400.0,473.0 L420.0,488.0 M345.0,468.0 L350.0,493.0 L355.0,533.0 L374.0,540.5 M290.0,483.0 L297.5,460.5 L300.0,438.0 M392.5,463.0 L405.0,468.0 L410.0,498.0 L400.0,518.0 M527.5,305.0 L525.0,280.0 L540.0,260.0 L555.0,250.0 L560.0,240.0 L550.0,220.0 M585.0,285.0 L595.0,310.0 L600.0,330.0 M602.5,290.0 L600.0,240.0 L607.5,212.5 L635.0,210.0 L645.0,235.0 L660.0,240.0 L675.0,225.0 L685.0,215.0 M700.0,260.0 L720.0,300.0 L717.5,330.0 M900.2,310.1 L895.2,295.6 L885.1,290.6 L880.1,260.5 L875.1,220.3 L870.1,185.2 L875.1,167.7 L867.6,140.1 L872.6,120.0 L900.2,110.0 L915.2,112.5 L920.3,130.1 L930.3,170.2 L965.4,195.3 L975.4,185.2 L988.0,192.8 L990.5,205.3 L998.0,217.8 L1018.0,222.9 L1020.6,250.4 L1020.6,273.0 L1015.5,285.5 L995.5,310.1 L962.0,337.0 L950.0,345.0 M871.3,217.8 L840.0,207.8 L800.0,215.0 L782.0,218.0 M728.0,290.0 L723.0,245.0 L713.0,230.0 M783.0,230.0 L768.0,240.0 L770.5,290.0 M1060.0,388.8 L1062.5,320.0 L1070.0,317.5 L1095.0,322.5 L1110.0,325.0 M1060.0,388.8 L1075.0,395.0 L1087.5,396.2 L1100.0,387.5 M1065.0,397.5 L1070.0,410.0 L1080.0,410.0 L1090.0,407.5 M1065.0,397.5 L1065.0,440.0 L1080.0,442.5 L1092.5,440.0 L1112.5,425.0 L1122.5,415.0 M1075.0,445.0 L1085.0,455.0 L1115.0,462.5 L1125.0,465.0 M608.3,490.0 L600.8,505.0 L580.8,525.1 L570.7,540.2 L553.2,555.2 L540.6,572.8 L535.6,590.3 L525.6,595.3 L515.5,600.3 L503.0,607.9 L490.5,610.4 L480.4,612.9 L460.4,612.9 L455.4,605.4 M525.6,595.3 L530.6,605.4 L523.1,625.4 L515.5,643.0 L505.5,650.5 M505.5,605.4 L500.5,620.4 L490.5,638.0 L480.4,648.0 L460.4,648.0 L455.4,635.5 M480.4,607.9 L485.5,630.4 L490.5,645.5 M590.8,625.4 L573.2,630.4 L553.2,638.0 L530.6,648.0 L513.0,653.0 L490.5,663.0 M593.3,625.4 L570.7,640.5 L545.6,650.5 L520.6,665.5 L510.5,675.6 M393.9,621.7 L415.2,615.4 L440.3,612.9 L455.4,615.4 M382.6,630.4 L405.2,635.5 L440.3,630.4 L455.4,630.4 M340.0,507.6 L355.0,510.1 L365.1,530.1 L372.6,537.6 M415.2,510.1 L420.3,525.1 L397.7,537.6 L392.7,527.6 M372.6,565.2 L390.2,567.7 L410.2,560.2 L407.7,542.7 L400.2,540.2 M307.5,697.5 L302.5,680.0 L317.5,665.0 M327.5,690.0 L355.0,685.0 L395.0,690.0 L420.0,680.0 L440.0,677.5 M362.5,665.0 L375.0,655.0 L400.0,665.0 L415.0,680.0 M460.0,671.2 L462.5,690.0 L475.0,700.0 M505.0,710.0 L520.0,720.0 L530.0,730.0" fill="none" stroke="#e4da96" stroke-width="1.9" stroke-linejoin="round" stroke-linecap="round"/>
<path d="M527.5,710.0 L512.5,692.5 L497.5,680.0 L485.0,667.5 L460.0,670.0 L437.5,656.2 L415.0,647.5 L392.5,637.5 L385.0,630.0 L390.0,620.0 L390.0,612.5 L382.5,600.0 L380.0,590.0 L382.5,580.0 L375.0,572.5 L370.0,560.0 L372.5,550.0 L375.0,545.0 L385.0,527.5 L397.5,515.0 L405.0,505.0 L415.0,490.0 L420.0,485.0 L435.0,477.5 L445.0,467.5 L452.5,455.0 L450.0,435.0 L451.2,420.0 L451.2,400.0 L453.8,385.0 L467.5,370.0 L490.0,365.0 L492.5,355.0 L515.0,335.0 L522.5,305.0 L527.5,301.2 L535.0,305.0 L542.5,317.5 L562.5,332.5 L577.5,335.0 L590.0,332.5 L597.5,327.5 L607.5,327.5 L615.0,340.0 L630.0,352.5 L645.0,347.5 L665.0,343.8 L675.0,340.0 L680.0,325.2 L690.0,306.4 L698.8,291.4 L707.6,283.2 L713.9,283.6 L722.6,297.6 L725.8,299.5 L725.1,281.3 L726.4,270.0 L731.4,268.2 L737.7,273.8 L740.2,282.6 L750.2,288.9 L774.0,296.4 L782.8,285.7 L786.6,286.4 L792.9,298.9 L805.4,316.5 L825.5,325.2 L828.6,320.2 L830.5,306.4 L840.0,305.2 L865.0,302.5 L885.0,308.8 L900.0,311.2 L912.5,325.0 L920.0,350.0 L932.5,345.0 L950.0,343.8 L960.0,342.5 L965.0,355.0 L975.0,377.5 L985.0,381.2 L1012.5,370.0 L1037.5,357.5 L1041.2,352.5 L1047.5,362.5 L1052.5,375.0 L1060.0,388.8 L1050.0,405.0 L1042.5,425.0 L1037.5,465.0 L1042.5,470.0 L1060.0,480.0 L1080.0,483.8 L1092.5,488.8 L1097.5,502.5 L1087.5,510.0 L1072.5,511.2 L1052.5,490.5 L1047.5,489.5 L1055.0,497.5 L1070.0,517.5 L1060.0,520.0 L1050.0,520.0 L1055.0,530.0 L1042.5,535.0 L1040.0,542.5 L1052.5,552.5 L1047.5,570.0 L1035.0,565.0 L1015.0,570.0 L1010.0,590.0 L1000.0,598.8 L985.0,597.5 L980.0,580.0 L967.5,585.0 L965.0,597.5 L942.5,606.2 L925.0,620.0 L907.5,630.0 L900.0,647.5 L882.5,652.5 L875.0,665.0 L857.5,677.5 L852.5,682.5 L840.0,670.0 L830.0,660.0 L825.0,657.5 L822.5,662.5 L795.0,671.2 L780.0,666.2 L760.0,670.0 L755.0,682.5 L735.0,690.0 L725.0,705.0 L695.0,725.0 L690.0,740.0 L687.5,755.0 L670.0,770.0 L642.5,776.2 L637.5,770.0 L625.0,771.2 L620.0,767.5 L617.5,767.5 L595.0,757.5 L572.5,750.0 L555.0,742.5 L545.0,730.0 L528.0,709.5 L513.8,692.5 L527.5,710.0 M317.5,657.5 L332.5,665.0 L352.5,652.5 L372.5,642.5 L380.0,635.0 L385.0,630.0" fill="none" stroke="#d8901a" stroke-width="3.4" stroke-linejoin="round" stroke-linecap="round"/>
<path d="M527.5,710.0 L512.5,692.5 L497.5,680.0 L485.0,667.5 L460.0,670.0 L437.5,656.2 L415.0,647.5 L392.5,637.5 L385.0,630.0 L390.0,620.0 L390.0,612.5 L382.5,600.0 L380.0,590.0 L382.5,580.0 L375.0,572.5 L370.0,560.0 L372.5,550.0 L375.0,545.0 L385.0,527.5 L397.5,515.0 L405.0,505.0 L415.0,490.0 L420.0,485.0 L435.0,477.5 L445.0,467.5 L452.5,455.0 L450.0,435.0 L451.2,420.0 L451.2,400.0 L453.8,385.0 L467.5,370.0 L490.0,365.0 L492.5,355.0 L515.0,335.0 L522.5,305.0 L527.5,301.2 L535.0,305.0 L542.5,317.5 L562.5,332.5 L577.5,335.0 L590.0,332.5 L597.5,327.5 L607.5,327.5 L615.0,340.0 L630.0,352.5 L645.0,347.5 L665.0,343.8 L675.0,340.0 L680.0,325.2 L690.0,306.4 L698.8,291.4 L707.6,283.2 L713.9,283.6 L722.6,297.6 L725.8,299.5 L725.1,281.3 L726.4,270.0 L731.4,268.2 L737.7,273.8 L740.2,282.6 L750.2,288.9 L774.0,296.4 L782.8,285.7 L786.6,286.4 L792.9,298.9 L805.4,316.5 L825.5,325.2 L828.6,320.2 L830.5,306.4 L840.0,305.2 L865.0,302.5 L885.0,308.8 L900.0,311.2 L912.5,325.0 L920.0,350.0 L932.5,345.0 L950.0,343.8 L960.0,342.5 L965.0,355.0 L975.0,377.5 L985.0,381.2 L1012.5,370.0 L1037.5,357.5 L1041.2,352.5 L1047.5,362.5 L1052.5,375.0 L1060.0,388.8 L1050.0,405.0 L1042.5,425.0 L1037.5,465.0 L1042.5,470.0 L1060.0,480.0 L1080.0,483.8 L1092.5,488.8 L1097.5,502.5 L1087.5,510.0 L1072.5,511.2 L1052.5,490.5 L1047.5,489.5 L1055.0,497.5 L1070.0,517.5 L1060.0,520.0 L1050.0,520.0 L1055.0,530.0 L1042.5,535.0 L1040.0,542.5 L1052.5,552.5 L1047.5,570.0 L1035.0,565.0 L1015.0,570.0 L1010.0,590.0 L1000.0,598.8 L985.0,597.5 L980.0,580.0 L967.5,585.0 L965.0,597.5 L942.5,606.2 L925.0,620.0 L907.5,630.0 L900.0,647.5 L882.5,652.5 L875.0,665.0 L857.5,677.5 L852.5,682.5 L840.0,670.0 L830.0,660.0 L825.0,657.5 L822.5,662.5 L795.0,671.2 L780.0,666.2 L760.0,670.0 L755.0,682.5 L735.0,690.0 L725.0,705.0 L695.0,725.0 L690.0,740.0 L687.5,755.0 L670.0,770.0 L642.5,776.2 L637.5,770.0 L625.0,771.2 L620.0,767.5 L617.5,767.5 L595.0,757.5 L572.5,750.0 L555.0,742.5 L545.0,730.0 L528.0,709.5 L513.8,692.5 L527.5,710.0 M317.5,657.5 L332.5,665.0 L352.5,652.5 L372.5,642.5 L380.0,635.0 L385.0,630.0" fill="none" stroke="#f5b030" stroke-width="2.2" stroke-linejoin="round" stroke-linecap="round"/>
<circle cx="263" cy="210" r="2.3" fill="#fff" stroke="#333" stroke-width="1.2"/>
<text x="246" y="206.5" font-size="10" font-weight="normal" letter-spacing="-0.3" fill="#333" stroke="#fff" stroke-width="2.4" stroke-linejoin="round" paint-order="stroke">Ísafjörður</text>
<circle cx="582.5" cy="283" r="2.3" fill="#fff" stroke="#333" stroke-width="1.2"/>
<text x="554.5" y="279" font-size="10" font-weight="normal" letter-spacing="-0.3" fill="#333" stroke="#fff" stroke-width="2.4" stroke-linejoin="round" paint-order="stroke">Sauðárkrókur</text>
<circle cx="672.5" cy="211.5" r="2.3" fill="#fff" stroke="#333" stroke-width="1.2"/>
<text x="647" y="207" font-size="10" font-weight="normal" letter-spacing="-0.3" fill="#333" stroke="#fff" stroke-width="2.4" stroke-linejoin="round" paint-order="stroke">Ólafsfjörður</text>
<circle cx="722" cy="297" r="2.3" fill="#fff" stroke="#333" stroke-width="1.2"/>
<text x="703.8" y="292.6" font-size="10" font-weight="normal" letter-spacing="-0.3" fill="#333" stroke="#fff" stroke-width="2.4" stroke-linejoin="round" paint-order="stroke">Akureyri</text>
<circle cx="1059.4" cy="388.4" r="2.3" fill="#fff" stroke="#333" stroke-width="1.2"/>
<text x="1038.8" y="383.70000000000005" font-size="10" font-weight="normal" letter-spacing="-0.3" fill="#333" stroke="#fff" stroke-width="2.4" stroke-linejoin="round" paint-order="stroke">Egilsstaðir</text>
<circle cx="1123.3" cy="414.4" r="2.3" fill="#fff" stroke="#333" stroke-width="1.2"/>
<text x="1092" y="409" font-size="10" font-weight="normal" letter-spacing="-0.3" fill="#333" stroke="#fff" stroke-width="2.4" stroke-linejoin="round" paint-order="stroke">Neskaupstaður</text>
<circle cx="1076.6" cy="439" r="2.3" fill="#fff" stroke="#333" stroke-width="1.2"/>
<text x="1048" y="433.6" font-size="10" font-weight="normal" letter-spacing="-0.3" fill="#333" stroke="#fff" stroke-width="2.4" stroke-linejoin="round" paint-order="stroke">Reyðarfjörður</text>
<circle cx="985" cy="604" r="2.3" fill="#fff" stroke="#333" stroke-width="1.2"/>
<text x="973.7" y="614.9" font-size="10" font-weight="normal" letter-spacing="-0.3" fill="#333" stroke="#fff" stroke-width="2.4" stroke-linejoin="round" paint-order="stroke">Höfn í</text>
<text x="965.9" y="625" font-size="10" font-weight="normal" letter-spacing="-0.3" fill="#333" stroke="#fff" stroke-width="2.4" stroke-linejoin="round" paint-order="stroke">Hornafirði</text>
<text x="661" y="450.5" font-size="9.5" font-weight="bold" letter-spacing="-0.3" fill="#555" stroke="#fff" stroke-width="2.4" stroke-linejoin="round" paint-order="stroke">Iceland</text>
<circle cx="300.4" cy="432.5" r="2.3" fill="#fff" stroke="#333" stroke-width="1.2"/>
<text x="271" y="427.1" font-size="10" font-weight="normal" letter-spacing="-0.3" fill="#333" stroke="#fff" stroke-width="2.4" stroke-linejoin="round" paint-order="stroke">Stykkishólmur</text>
<circle cx="212.4" cy="469.1" r="2.3" fill="#fff" stroke="#333" stroke-width="1.2"/>
<text x="195.3" y="479.4" font-size="10" font-weight="normal" letter-spacing="-0.3" fill="#333" stroke="#fff" stroke-width="2.4" stroke-linejoin="round" paint-order="stroke">Ólafsvík</text>
<circle cx="374.3" cy="545.2" r="2.3" fill="#fff" stroke="#333" stroke-width="1.2"/>
<text x="353" y="540.7" font-size="10" font-weight="normal" letter-spacing="-0.3" fill="#333" stroke="#fff" stroke-width="2.4" stroke-linejoin="round" paint-order="stroke">Borgarnes</text>
<circle cx="377.2" cy="629.6" r="3.0" fill="#fff" stroke="#333" stroke-width="1.8"/>
<text x="322.3" y="633.5" font-size="13" textLength="48.6" lengthAdjust="spacingAndGlyphs" fill="#fff" stroke="#fff" stroke-width="3" stroke-linejoin="round">Reykjavík</text>
<text x="322.3" y="633.5" font-size="13" textLength="48.6" lengthAdjust="spacingAndGlyphs" fill="#111" stroke="#111" stroke-width="0.35">Reykjavík</text>
<circle cx="394.4" cy="622.2" r="2.3" fill="#fff" stroke="#333" stroke-width="1.2"/>
<text x="397.6" y="625.7" font-size="10" font-weight="normal" letter-spacing="-0.3" fill="#333" stroke="#fff" stroke-width="2.4" stroke-linejoin="round" paint-order="stroke">Mosfellsbær</text>
<circle cx="316.8" cy="657.8" r="2.3" fill="#fff" stroke="#333" stroke-width="1.2"/>
<text x="287.8" y="652.6" font-size="10" font-weight="normal" letter-spacing="-0.3" fill="#333" stroke="#fff" stroke-width="2.4" stroke-linejoin="round" paint-order="stroke">Reykjanesbær</text>
<circle cx="371.7" cy="643.7" r="2.3" fill="#fff" stroke="#333" stroke-width="1.2"/>
<text x="375.6" y="654.7" font-size="10" font-weight="normal" letter-spacing="-0.3" fill="#333" stroke="#fff" stroke-width="2.4" stroke-linejoin="round" paint-order="stroke">Hafnarfjörður</text>
<circle cx="327" cy="689.2" r="2.3" fill="#fff" stroke="#333" stroke-width="1.2"/>
<text x="307.4" y="685" font-size="10" font-weight="normal" letter-spacing="-0.3" fill="#333" stroke="#fff" stroke-width="2.4" stroke-linejoin="round" paint-order="stroke">Grindavík</text>
<circle cx="458.4" cy="671" r="2.3" fill="#fff" stroke="#333" stroke-width="1.2"/>
<text x="443" y="665.6" font-size="10" font-weight="normal" letter-spacing="-0.3" fill="#333" stroke="#fff" stroke-width="2.4" stroke-linejoin="round" paint-order="stroke">Selfoss</text>
<circle cx="513" cy="692.5" r="2.3" fill="#fff" stroke="#333" stroke-width="1.2"/>
<text x="503.8" y="688.5" font-size="10" font-weight="normal" letter-spacing="-0.3" fill="#333" stroke="#fff" stroke-width="2.4" stroke-linejoin="round" paint-order="stroke">Hella</text>
<circle cx="528" cy="709.5" r="2.3" fill="#fff" stroke="#333" stroke-width="1.2"/>
<text x="531.8" y="713.5" font-size="10" font-weight="normal" letter-spacing="-0.3" fill="#333" stroke="#fff" stroke-width="2.4" stroke-linejoin="round" paint-order="stroke">Hvolsvöllur</text>
</svg>
</div>
<!-- grid box -->
<div class="abs" style="left:16px;top:168px;width:67px;height:67px;border:1px solid #000;border-right-width:2px"><div class="abs" style="left:0;top:0;width:64px;height:65px;border:1px solid #fff"></div>
  <div class="abs" style="left:32px;top:1px;width:1px;height:63px;background:#404040"></div>
  <div class="abs" style="left:1px;top:32px;width:63px;height:1px;background:#404040"></div>
</div>
<!-- dialog -->
<div class="abs" style="left:83px;top:145px;width:255px;height:108px;border:1px solid #20262e;border-radius:2px;background:linear-gradient(180deg,#cfdded 0%,#bcd0e6 25%,#c9d9ea 100%);box-shadow:1px 1px 2px rgba(0,0,0,0.35)">
  <div class="abs" style="left:0;top:0;width:253px;height:106px;border:1px solid #eef4fa;border-radius:2px"></div>
    <div class="abs" style="left:231px;top:4px;width:17px;height:17px;border:1px solid #7a8898;border-radius:2px;background:linear-gradient(#e8eef6,#c8d4e2)">
    <svg width="15" height="15" class="abs" style="left:0;top:0"><path d="M4.5,4.5 L10.5,10.5 M10.5,4.5 L4.5,10.5" stroke="#505a66" stroke-width="2"/><path d="M4.5,4.5 L10.5,10.5 M10.5,4.5 L4.5,10.5" stroke="#fff" stroke-width="0.6"/></svg>
  </div>
  <div class="abs" style="left:5px;top:23px;width:244px;height:79px;border:1px solid #000;background:#f0f0f0">
    <svg width="242" height="77" class="abs" style="left:0;top:0" font-family="Liberation Sans, sans-serif">
      <g stroke="#a0a0a0"><line x1="39.5" y1="6" x2="39.5" y2="34"/><line x1="78.5" y1="6" x2="78.5" y2="34"/><line x1="200.5" y1="6" x2="200.5" y2="34"/></g>
      <g stroke="#fff"><line x1="40.5" y1="6" x2="40.5" y2="34"/><line x1="79.5" y1="6" x2="79.5" y2="34"/><line x1="201.5" y1="6" x2="201.5" y2="34"/></g>
      <rect x="13.5" y="13.5" width="12" height="12" fill="#40d8e0" stroke="#000"/><path d="M14,25 L18,20 L21,23 L25,18 L25,25 Z" fill="#c8c020"/><circle cx="20" cy="17" r="1.6" fill="#f0f040"/>
      <path d="M19,24 L29,24 L24,29 Z" fill="#000"/>
      <path d="M57,15 A5.5,5.5 0 0 1 65,18 L67,16 L67,22 L61,22 L63,20 A3,3 0 0 0 58,18 Z" fill="#20a020"/>
      <path d="M64,27 A5.5,5.5 0 0 1 56,24 L54,26 L54,20 L60,20 L58,22 A3,3 0 0 0 63,24 Z" fill="#20a020"/>
      <rect x="92.5" y="20.5" width="9" height="9" fill="#b8cce0" stroke="#6080a0"/><path d="M95,25 L99,25 M97,23 L97,27" stroke="#203060" stroke-width="1"/>
      <circle cx="102" cy="17" r="5" fill="#d8ecf8" stroke="#4a7090" stroke-width="1.5"/><path d="M105.5,20.5 L111,26" stroke="#c08040" stroke-width="2.4"/>
      <rect x="123.5" y="20.5" width="9" height="9" fill="#b8cce0" stroke="#6080a0"/><path d="M126,25 L130,25" stroke="#203060" stroke-width="1"/>
      <circle cx="133" cy="17" r="5" fill="#d8ecf8" stroke="#4a7090" stroke-width="1.5"/><path d="M136.5,20.5 L142,26" stroke="#c08040" stroke-width="2.4"/>
      <circle cx="165" cy="17" r="5" fill="#d8ecf8" stroke="#4a7090" stroke-width="1.5"/><path d="M168.5,20.5 L174,26" stroke="#c08040" stroke-width="2.4"/>
      <path d="M154,24 L163,24 L158.5,29 Z" fill="#000"/>
            <path d="M213,14 Q217,9 222,11 M212,22 L218,16 M215,23 L219,19" stroke="#222" fill="none" stroke-width="1.2"/>
      <circle cx="215" cy="21" r="2.5" fill="none" stroke="#222" stroke-width="1"/>
      <rect x="224" y="10" width="1.5" height="9" fill="#000"/><rect x="221" y="18" width="7" height="2" fill="#d02020"/>
      <path d="M220,21 L231,21 L225.5,27 Z" fill="#000"/>
      <line x1="5" y1="42.5" x2="238" y2="42.5" stroke="#a0a0a0"/><line x1="5" y1="43.5" x2="238" y2="43.5" stroke="#fff"/>
      <line x1="5" y1="71.5" x2="238" y2="71.5" stroke="#a0a0a0"/><line x1="5" y1="72.5" x2="238" y2="72.5" stroke="#fff"/>
          </svg>
  </div>
</div>
<div id="status" class="abs">
  <div class="abs" style="left:249px;top:1px;width:1px;height:18px;background:#c8c8c8"></div>
  <div class="abs" style="left:470px;top:1px;width:1px;height:18px;background:#c8c8c8"></div>
  <div class="abs" style="left:640px;top:1px;width:1px;height:18px;background:#c8c8c8"></div>
  <div class="abs" style="left:0;top:18px;width:1276px;height:3px;background:#4a4f57"></div>
  <div class="abs" style="left:14px;top:14px;width:33px;height:18px;border-radius:50%;background:linear-gradient(#c8d4de,#8898a8 50%,#506070);border:1px solid #2a2e34"></div>
</div>
<svg width="1276" height="996" style="position:absolute;left:0;top:0;pointer-events:none" font-family="Liberation Sans, sans-serif">
<text x="23.2" y="14.3" font-size="12.5" font-weight="normal" fill="#ffffff" textLength="229.5" lengthAdjust="spacingAndGlyphs" xml:space="preserve">OziExplorer - Internet Maps (Experimental)</text>
<text x="21.0" y="33.8" font-size="12" font-weight="normal" fill="#1e1e1e" textLength="35.2" lengthAdjust="spacingAndGlyphs" xml:space="preserve">Fichier</text>
<text x="69.9" y="33.8" font-size="12" font-weight="normal" fill="#1e1e1e" textLength="48.4" lengthAdjust="spacingAndGlyphs" xml:space="preserve">Selection</text>
<text x="131.3" y="33.8" font-size="12" font-weight="normal" fill="#1e1e1e" textLength="53.4" lengthAdjust="spacingAndGlyphs" xml:space="preserve">Affichage</text>
<text x="196.8" y="33.8" font-size="12" font-weight="normal" fill="#1e1e1e" textLength="29.9" lengthAdjust="spacingAndGlyphs" xml:space="preserve">Carte</text>
<text x="238.8" y="33.8" font-size="12" font-weight="normal" fill="#1e1e1e" textLength="42.9" lengthAdjust="spacingAndGlyphs" xml:space="preserve">Options</text>
<text x="294.8" y="33.8" font-size="12" font-weight="normal" fill="#1e1e1e" textLength="58.9" lengthAdjust="spacingAndGlyphs" xml:space="preserve">Carte Dyna</text>
<text x="366.8" y="33.8" font-size="12" font-weight="normal" fill="#1e1e1e" textLength="58.9" lengthAdjust="spacingAndGlyphs" xml:space="preserve">Navigation</text>
<text x="438.8" y="33.8" font-size="12" font-weight="normal" fill="#1e1e1e" textLength="67.9" lengthAdjust="spacingAndGlyphs" xml:space="preserve">Elévation/3D</text>
<text x="519.8" y="33.8" font-size="12" font-weight="normal" fill="#1e1e1e" textLength="49.9" lengthAdjust="spacingAndGlyphs" xml:space="preserve">Magellan</text>
<text x="582.8" y="33.8" font-size="12" font-weight="normal" fill="#1e1e1e" textLength="23.9" lengthAdjust="spacingAndGlyphs" xml:space="preserve">Aide</text>
<text x="22.2" y="75" font-size="11.5" font-weight="normal" fill="#222222" textLength="22.8" lengthAdjust="spacingAndGlyphs" xml:space="preserve">Fer...</text>
<text x="61.7" y="75" font-size="11.5" font-weight="normal" fill="#282828" textLength="26.8" lengthAdjust="spacingAndGlyphs" xml:space="preserve">Ouvrir</text>
<text x="97.6" y="75" font-size="11.5" font-weight="normal" fill="#282828" textLength="31.0" lengthAdjust="spacingAndGlyphs" xml:space="preserve">Sauver</text>
<text x="529.8" y="75.3" font-size="11.5" font-weight="normal" fill="#5a5a5a" textLength="29.9" lengthAdjust="spacingAndGlyphs" xml:space="preserve">Glisser</text>
<text x="570.8" y="75.3" font-size="11.5" font-weight="normal" fill="#000000" textLength="19.4" lengthAdjust="spacingAndGlyphs" xml:space="preserve">Info</text>
<text x="650.8" y="75" font-size="11.5" font-weight="normal" fill="#000000" textLength="26.9" lengthAdjust="spacingAndGlyphs" xml:space="preserve">Index</text>
<text x="697.8" y="75" font-size="11.5" font-weight="normal" fill="#000000" textLength="23.4" lengthAdjust="spacingAndGlyphs" xml:space="preserve">Nom</text>
<text x="7.6" y="122" font-size="12" font-weight="normal" fill="#000000" textLength="67.1" lengthAdjust="spacingAndGlyphs" xml:space="preserve">66° 31,098′ N</text>
<text x="98.8" y="122" font-size="12" font-weight="normal" fill="#000000" textLength="69.9" lengthAdjust="spacingAndGlyphs" xml:space="preserve">22° 09,163′ W</text>
<text x="185.8" y="122" font-size="12" font-weight="normal" fill="#000000" textLength="53.9" lengthAdjust="spacingAndGlyphs" xml:space="preserve">UTM  27W</text>
<text x="250.8" y="122" font-size="12" font-weight="normal" fill="#000000" textLength="48.9" lengthAdjust="spacingAndGlyphs" xml:space="preserve">4 48 748E</text>
<text x="311.8" y="122" font-size="12" font-weight="normal" fill="#000000" textLength="55.9" lengthAdjust="spacingAndGlyphs" xml:space="preserve">73 78 156N</text>
<text x="375.8" y="122" font-size="12" font-weight="normal" fill="#1a2560" textLength="42.9" lengthAdjust="spacingAndGlyphs" xml:space="preserve">WGS 84</text>
<text x="90.5" y="161.8" font-size="12.5" font-weight="normal" fill="#3a4858" textLength="116.2" lengthAdjust="spacingAndGlyphs" xml:space="preserve">Google Maps Control</text>
<text x="100.7" y="230.7" font-size="12" font-weight="normal" fill="#000000" textLength="39.0" lengthAdjust="spacingAndGlyphs" xml:space="preserve">Queued</text>
<text x="146.3" y="230.7" font-size="12" font-weight="normal" fill="#000000" textLength="7.4" lengthAdjust="spacingAndGlyphs" xml:space="preserve">0</text>
<text x="178.1" y="230.7" font-size="12" font-weight="normal" fill="#000000" textLength="39.1" lengthAdjust="spacingAndGlyphs" xml:space="preserve">Loading</text>
<text x="224.0" y="230.7" font-size="12" font-weight="normal" fill="#000000" textLength="7.5" lengthAdjust="spacingAndGlyphs" xml:space="preserve">0</text>
<text x="242.3" y="230.7" font-size="12" font-weight="normal" fill="#000000" textLength="47.4" lengthAdjust="spacingAndGlyphs" xml:space="preserve">Retrieved</text>
<text x="297.3" y="230.7" font-size="12" font-weight="normal" fill="#000000" textLength="19.4" lengthAdjust="spacingAndGlyphs" xml:space="preserve">130</text>
<text x="270.8" y="194" font-size="12" font-weight="normal" fill="#000000" textLength="7.5" lengthAdjust="spacingAndGlyphs" xml:space="preserve">7</text>
<text x="252.3" y="989.6" font-size="12" font-weight="normal" fill="#000000" textLength="215.4" lengthAdjust="spacingAndGlyphs" xml:space="preserve">Waypoints utilisés : 0 de 10000  (GPS:250)</text>
<text x="473.3" y="989.6" font-size="12" font-weight="normal" fill="#000000" textLength="131.4" lengthAdjust="spacingAndGlyphs" xml:space="preserve">Evnmts utilisés : 0 de 500</text>
</svg>
</body></html>
